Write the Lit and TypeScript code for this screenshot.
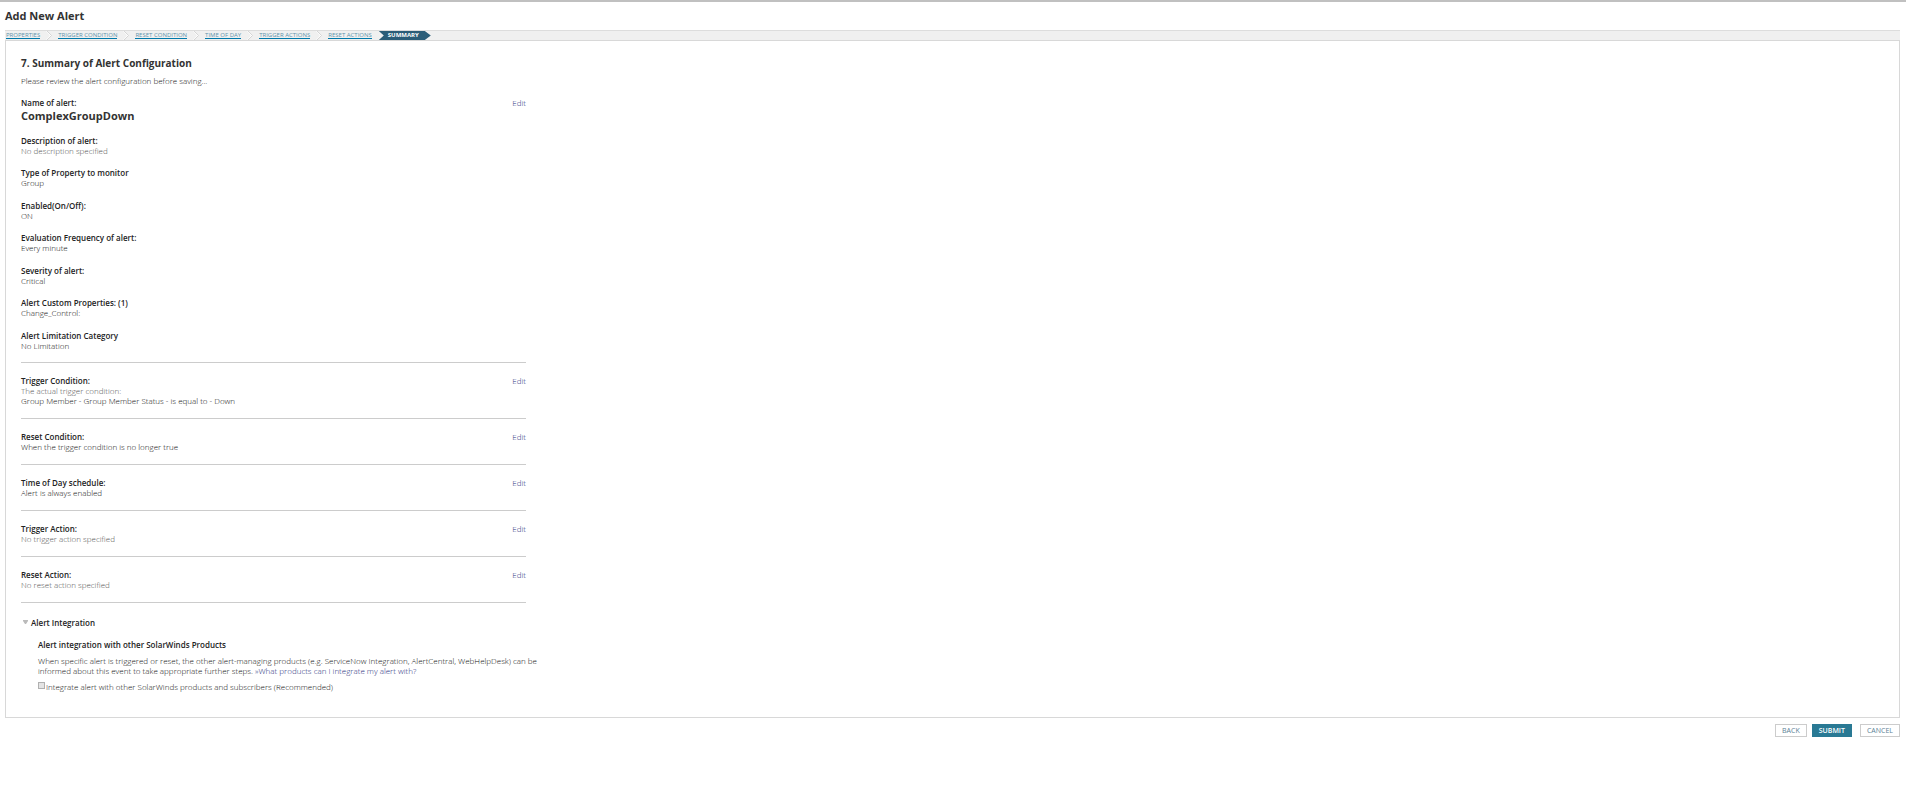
import { LitElement, html, css, svg, nothing } from "lit";
import { customElement } from "lit/decorators.js";

interface Entry {
  label: string;
  value: string;
  muted?: boolean;
}

interface Section {
  label: string;
  lines: { text: string; muted?: boolean }[];
}

const STEPS = ["Properties", "Trigger Condition", "Reset Condition", "Time of Day", "Trigger Actions", "Reset Actions"];

const ENTRIES: Entry[] = [
  { label: "Description of alert:", value: "No description specified", muted: true },
  { label: "Type of Property to monitor", value: "Group" },
  { label: "Enabled(On/Off):", value: "ON" },
  { label: "Evaluation Frequency of alert:", value: "Every minute" },
  { label: "Severity of alert:", value: "Critical" },
  { label: "Alert Custom Properties: (1)", value: "Change_Control:" },
  { label: "Alert Limitation Category", value: "No Limitation" },
];

const SECTIONS: Section[] = [
  {
    label: "Trigger Condition:",
    lines: [
      { text: "The actual trigger condition:", muted: true },
      { text: "Group Member - Group Member Status - is equal to - Down" },
    ],
  },
  { label: "Reset Condition:", lines: [{ text: "When the trigger condition is no longer true" }] },
  { label: "Time of Day schedule:", lines: [{ text: "Alert is always enabled" }] },
  { label: "Trigger Action:", lines: [{ text: "No trigger action specified", muted: true }] },
  { label: "Reset Action:", lines: [{ text: "No reset action specified", muted: true }] },
];

@customElement("app-root")
export class AppRoot extends LitElement {
  static styles = css`
    :host {
      display: block;
      font: 300 8px/10px "Open Sans", "Noto Sans", sans-serif;
      color: #111;
      background: #fff;
      border-top: 2px solid #c0c0c0;
    }
    * { box-sizing: border-box; }
    h1, h2, h3, p, dl, dd, ol { margin: 0; padding: 0; }
    a { color: #1f2f7c; text-decoration: none; }
    .page { padding: 7px 6px 0 5px; }
    .title { font-size: 11px; line-height: 14px; font-weight: 700; color: #333; margin-bottom: 7px; }
    .steps {
      display: flex; list-style: none; height: 10px;
      background: #f0f0f0; border-top: 1px solid #ddd;
      font-size: 6px; line-height: 9px; font-weight: 400; text-transform: uppercase;
    }
    .step { display: flex; padding-left: 1px; }
    .step a { color: #5e93ab; height: 8px; line-height: 8px; border-bottom: 1px solid #0079aa; }
    .chevron { width: 6px; height: 9px; margin: 0 5px 0 6px; }
    .current {
      margin-left: 7px; padding: 0 12px 0 9px;
      color: #fff; background: #2b5d78; font-weight: 700;
      clip-path: polygon(0 0, calc(100% - 6px) 0, 100% 50%, calc(100% - 6px) 100%, 0 100%, 5px 50%);
    }
    .panel { border: 1px solid #d8d8d8; padding: 15px 16px 25px 15px; }
    .content { max-width: 505px; }
    .heading { font-size: 10px; line-height: 14px; font-weight: 700; color: #333; }
    .intro { margin: 6px 0 12px; }
    .row { display: flex; justify-content: space-between; }
    .label { font-size: 8px; font-weight: 600; color: #222; }
    .name { font-size: 11px; line-height: 16px; font-weight: 700; color: #333; margin-bottom: 12px; }
    .entry { margin-bottom: 12px; }
    .entry:nth-child(even) { margin-bottom: 13px; }
    .entry:last-child { margin-bottom: 11px; }
    .muted { color: #555; }
    .section { border-top: 1px solid #ccc; padding: 13px 0 12px; }
    .integration { border-top: 1px solid #ccc; padding-top: 15px; }
    .toggle {
      display: flex; align-items: center; gap: 3px; padding: 0 0 0 2px;
      border: 0; background: none; font: inherit; font-weight: 600; color: #222;
    }
    .arrow { width: 5px; height: 4px; margin-bottom: 3px; }
    .details { padding: 12px 0 0 17px; }
    .details p { margin: 6px 0; white-space: nowrap; }
    .check { display: flex; align-items: center; gap: 1px; }
    .box {
      appearance: none; width: 7px; height: 7px; margin: 0 0 3px;
      border: 1px solid #b0b0b0; background: #e4e4e4;
    }
    .actions { display: flex; justify-content: flex-end; gap: 5px; padding-top: 6px; }
    .btn {
      font: 7px/11px "Open Sans", "Noto Sans", sans-serif; text-transform: uppercase;
      height: 13px; padding: 0 6px; border: 1px solid #ccc; background: #fff; color: #5a8196;
    }
    .primary { background: #297994; border-color: #297994; color: #fff; font-weight: 600; }
    .cancel { margin-left: 3px; }
  `;

  render() {
    return html`
      <main class="page">
        <h1 class="title">Add New Alert</h1>
        <ol class="steps">
          ${STEPS.map(
            (s, i) => html`<li class="step">
              <a href="#">${s}</a>
              ${i < STEPS.length - 1
                ? html`<svg class="chevron" viewBox="0 0 6 9" aria-hidden="true">
                    ${svg`<path d="M0 0H1L5.500 4.500L1 9H0L4 4.500Z" fill="#fff"/><path d="M1 0L5.500 4.500L1 9" fill="none" stroke="#ccc" stroke-width=".8"/>`}
                  </svg>`
                : nothing}
            </li>`
          )}
          <li class="current" aria-current="step">Summary</li>
        </ol>
        <section class="panel">
          <div class="content">
            <h2 class="heading">7. Summary of Alert Configuration</h2>
            <p class="intro">Please review the alert configuration before saving...</p>
            <div class="row"><span class="label">Name of alert:</span><a href="#">Edit</a></div>
            <div class="name">ComplexGroupDown</div>
            <dl>
              ${ENTRIES.map(
                (e) => html`<div class="entry">
                  <dt class="label">${e.label}</dt>
                  <dd class=${e.muted ? "muted" : ""}>${e.value}</dd>
                </div>`
              )}
            </dl>
            ${SECTIONS.map(
              (s) => html`<section class="section">
                <div class="row"><span class="label">${s.label}</span><a href="#">Edit</a></div>
                ${s.lines.map((l) => html`<div class=${l.muted ? "muted" : ""}>${l.text}</div>`)}
              </section>`
            )}
            <section class="integration">
              <button class="toggle" type="button" aria-expanded="true">
                <svg class="arrow" viewBox="0 0 5 4" aria-hidden="true"><path d="M0 0H5V1L3 4H2L0 1Z" fill="#bbb" /></svg>
                Alert Integration
              </button>
              <div class="details">
                <h3 class="label">Alert integration with other SolarWinds Products</h3>
                <p>
                  When specific alert is triggered or reset, the other alert-managing products (e.g. ServiceNow Integration, AlertCentral, WebHelpDesk) can be<br />
                  informed about this event to take appropriate further steps.
                  <a href="#">»What products can I integrate my alert with?</a>
                </p>
                <label class="check"><input class="box" type="checkbox" />Integrate alert with other SolarWinds products and subscribers (Recommended)</label>
              </div>
            </section>
          </div>
        </section>
        <div class="actions">
          <button class="btn" type="button">Back</button>
          <button class="btn primary" type="button">Submit</button>
          <button class="btn cancel" type="button">Cancel</button>
        </div>
      </main>
    `;
  }
}
